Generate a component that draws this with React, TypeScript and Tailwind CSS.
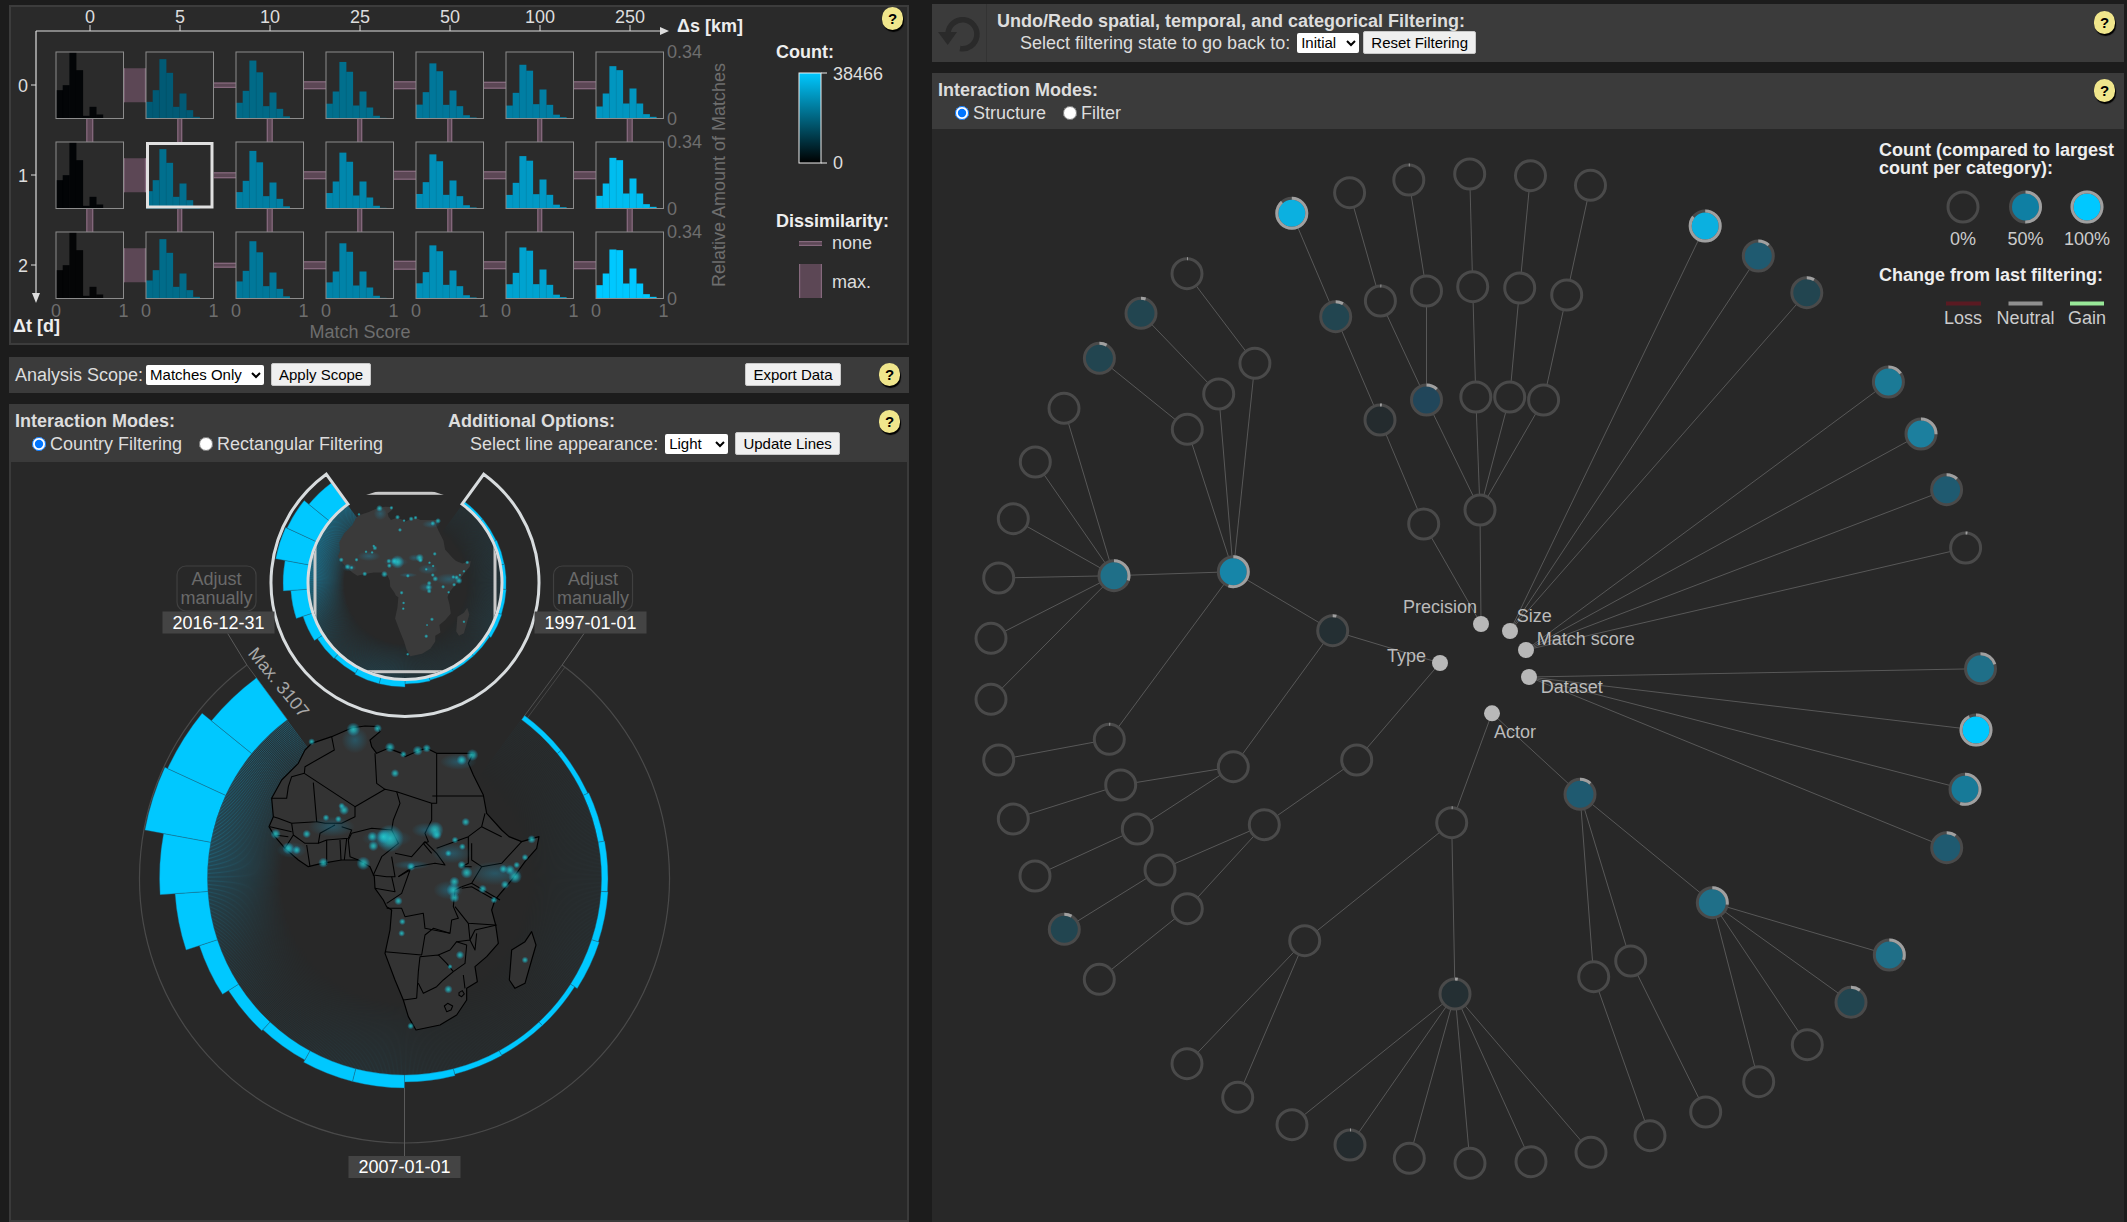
const CYAN = "#00c8ff";

// ---- small pieces ----

const HelpDot = () => (
  <span className="flex h-[23px] w-[21px] shrink-0 items-center justify-center rounded-full bg-[#f0e68c] text-[15px] font-bold text-black shadow-[1px_2px_1px_#000]">
    ?
  </span>
);

const Btn = ({ label, className = "" }: { label: string; className?: string }) => (
  <button
    type="button"
    className={`h-[23px] rounded-[2px] border border-[#c8c8c8] bg-[#efefef] text-[15px] leading-none text-black ${className}`}
  >
    {label}
  </button>
);

const Sel = ({ label, className = "" }: { label: string; className?: string }) => (
  <select className={`h-[20px] rounded-[2px] bg-white text-[15px] leading-none text-black ${className}`} defaultValue={label}>
    <option>{label}</option>
  </select>
);

const Radio = ({ label, name, checked, className = "" }: { label: string; name: string; checked?: boolean; className?: string }) => (
  <label className={`flex items-center ${className}`}>
    <input
      type="radio"
      name={name}
      defaultChecked={checked}
      className="mr-[4px] h-[14px] w-[14px] accent-[#0075ff]"
    />
    {label}
  </label>
);

const UndoIcon = () => (
  <svg width={55} height={58} viewBox="0 0 55 58">
    <path d="M16 29A14.5 14.5 0 1 1 28 44.5" fill="none" stroke="#2a2a2a" strokeWidth={5.5} />
    <polygon points="6,28 25,28 15.7,41" fill="#2a2a2a" />
  </svg>
);

// ---- matrix of histograms ----

const COL_X = [56, 146, 236, 326, 416, 506, 596];
const ROW_Y = [52, 142, 232];
const CELL_W = 67.5;
const CELL_H = 66.5;
const KM = ["0", "5", "10", "25", "50", "100", "250"];

const BAR_COLORS = [
  ["#030507", "#015a75", "#016a87", "#016f8d", "#01779a", "#017ea3", "#0196c0"],
  ["#020406", "#016f8e", "#017fa3", "#0187ad", "#018fb8", "#0199c5", "#00bdf0"],
  ["#040506", "#016c8a", "#01789a", "#0183a8", "#0190b8", "#00a3d0", "#00c8ff"],
];

const HIST_A = [50, 85, 178, 137, 35, 75, 25, 5, 0, 0];
const HIST_B = [36, 75, 157, 145, 45, 90, 45, 13, 5, 0];
const HIST_0 = [85, 100, 198, 145, 8, 35, 12, 0, 0, 0];

const histFor = (row: number, col: number) => {
  if (col === 0) return HIST_0;
  const t = (col - 1) / 5;
  return HIST_A.map((a, i) => {
    const v = a + (HIST_B[i] - a) * t;
    return i === 2 ? v - row * 2.5 * t * 2 : i === 0 ? v + row * 2 : v;
  });
};

const H_LINK = [
  [34, 5.5, 8, 8, 7, 8],
  [34, 6, 8, 9, 8, 8],
  [34, 5, 8, 9, 8, 8],
];
const V_LINK = [7, 5, 6, 5, 5, 5, 6];

const Link = ({ x, y, w, h }: { x: number; y: number; w: number; h: number }) => (
  <g>
    <rect x={x} y={y} width={w} height={h} fill="#5c4755" />
    {w > h ? (
      <>
        <rect x={x} y={y} width={w} height={1.2} fill="#86697d" />
        <rect x={x} y={y + h - 1.2} width={w} height={1.2} fill="#86697d" />
      </>
    ) : (
      <>
        <rect x={x} y={y} width={1.2} height={h} fill="#86697d" />
        <rect x={x + w - 1.2} y={y} width={1.2} height={h} fill="#86697d" />
      </>
    )}
  </g>
);

const MatrixChart = () => (
  <svg viewBox="9 5 900 340" className="absolute inset-0 h-full w-full" fontSize={18}>
    <defs>
      <linearGradient id="countScale" x1="0" y1="0" x2="0" y2="1">
        <stop offset="0" stopColor={CYAN} />
        <stop offset="1" stopColor="#000" />
      </linearGradient>
    </defs>

    {/* axes */}
    <line x1={36} y1={31} x2={664} y2={31} stroke="#ddd" strokeWidth={1.2} />
    <polygon points="660,27 669,31 660,35" fill="#ddd" />
    <line x1={36} y1={31} x2={36} y2={296} stroke="#ddd" strokeWidth={1.2} />
    <polygon points="32,293 40,293 36,303" fill="#ddd" />
    {KM.map((k, i) => (
      <g key={k}>
        <line x1={90 + i * 90} y1={31} x2={90 + i * 90} y2={25} stroke="#ddd" />
        <text x={90 + i * 90} y={17} fill="#ddd" textAnchor="middle" dominantBaseline="central">
          {k}
        </text>
      </g>
    ))}
    {[0, 1, 2].map((r) => (
      <g key={r}>
        <line x1={36} y1={85 + r * 90} x2={31} y2={85 + r * 90} stroke="#ddd" />
        <text x={23} y={86 + r * 90} fill="#ddd" textAnchor="middle" dominantBaseline="central">
          {r}
        </text>
      </g>
    ))}
    <text x={677} y={26} fill="#eee" fontWeight="bold" dominantBaseline="central">
      Δs [km]
    </text>
    <text x={13} y={326} fill="#eee" fontWeight="bold" dominantBaseline="central">
      Δt [d]
    </text>

    {/* links between the cells */}
    {ROW_Y.map((y, r) =>
      H_LINK[r].map((h, c) => (
        <Link key={`h${r}${c}`} x={COL_X[c] + CELL_W} y={y + CELL_H / 2 - h / 2} w={22.5} h={h} />
      ))
    )}
    {[0, 1].map((r) =>
      COL_X.map((x, c) => (
        <Link key={`v${r}${c}`} x={x + CELL_W / 2 - V_LINK[c] / 2} y={ROW_Y[r] + CELL_H} w={V_LINK[c]} h={23.5} />
      ))
    )}

    {/* cells */}
    {ROW_Y.map((y, r) =>
      COL_X.map((x, c) => {
        const selected = r === 1 && c === 1;
        const hist = histFor(r, c);
        return (
          <g key={`${r}-${c}`}>
            <rect x={x} y={y} width={CELL_W} height={CELL_H} fill="#2b2b2b" />
            {hist.map((h, i) =>
              h > 0 ? (
                <rect key={i} x={x + i * 6.7} y={y + CELL_H - h / 3} width={7} height={h / 3} fill={BAR_COLORS[r][c]} />
              ) : null
            )}
            {hist.map((h, i) =>
              i > 0 && h > 0 ? (
                <line
                  key={i}
                  x1={x + i * 6.7}
                  y1={y + CELL_H}
                  x2={x + i * 6.7}
                  y2={y + CELL_H - Math.min(h, hist[i - 1]) / 3}
                  stroke="#00000018"
                  strokeWidth={0.6}
                />
              ) : null
            )}
            <rect
              x={selected ? x + 1.5 : x}
              y={selected ? y + 1.5 : y}
              width={selected ? CELL_W - 3 : CELL_W}
              height={selected ? CELL_H - 3 : CELL_H}
              fill="none"
              stroke={selected ? "#e0e0e0" : "#8c8c8c"}
              strokeWidth={selected ? 3 : 1}
            />
            {r === 2 && (
              <g fill="#6e6e6e" textAnchor="middle" dominantBaseline="central">
                <text x={x} y={311}>
                  0
                </text>
                <text x={x + CELL_W} y={311}>
                  1
                </text>
              </g>
            )}
          </g>
        );
      })
    )}
    {ROW_Y.map((y) => (
      <g key={y} fill="#6e6e6e" dominantBaseline="central">
        <text x={667} y={y}>
          0.34
        </text>
        <text x={667} y={y + CELL_H}>
          0
        </text>
      </g>
    ))}
    <text x={360} y={332} fill="#6e6e6e" textAnchor="middle" dominantBaseline="central">
      Match Score
    </text>
    <text x={0} y={0} fill="#6e6e6e" textAnchor="middle" dominantBaseline="central" transform="translate(719 175) rotate(-90)">
      Relative Amount of Matches
    </text>

    {/* legends */}
    <text x={776} y={52} fill="#eee" fontWeight="bold" dominantBaseline="central">
      Count:
    </text>
    <rect x={799} y={73} width={22} height={90} fill="url(#countScale)" stroke="#eee" strokeWidth={1} />
    <line x1={821} y1={73} x2={827} y2={73} stroke="#eee" />
    <line x1={821} y1={163} x2={827} y2={163} stroke="#eee" />
    <text x={833} y={74} fill="#ddd" dominantBaseline="central">
      38466
    </text>
    <text x={833} y={163} fill="#ddd" dominantBaseline="central">
      0
    </text>
    <text x={776} y={221} fill="#eee" fontWeight="bold" dominantBaseline="central">
      Dissimilarity:
    </text>
    <Link x={799} y={241} w={23} h={5} />
    <text x={832} y={243} fill="#ddd" dominantBaseline="central">
      none
    </text>
    <Link x={799} y={264} w={23} h={34} />
    <text x={832} y={282} fill="#ddd" dominantBaseline="central">
      max.
    </text>
  </svg>
);

// ---- radial map ----

const START = 36.5;
const STEP = 14.35;
const BIN_R = [202, 202, 203, 203.5, 204, 205, 202, 202, 202.5, 204, 210, 210, 207.5, 209, 216, 230, 245, 264, 261, 249];

const polar = (cx: number, cy: number, r: number, deg: number): [number, number] => {
  const a = (deg * Math.PI) / 180;
  return [cx + r * Math.sin(a), cy - r * Math.cos(a)];
};

const wedge = (cx: number, cy: number, r0: number, r1: number, a0: number, a1: number) => {
  const [x0, y0] = polar(cx, cy, r0, a0);
  const [x1, y1] = polar(cx, cy, r1, a0);
  const [x2, y2] = polar(cx, cy, r1, a1);
  const [x3, y3] = polar(cx, cy, r0, a1);
  return `M${x0} ${y0}L${x1} ${y1}A${r1} ${r1} 0 0 1 ${x2} ${y2}L${x3} ${y3}A${r0} ${r0} 0 0 0 ${x0} ${y0}Z`;
};

// everything of the continent is written in one local grid (3 units = 1 px)
const AFRICA =
  "M230 50L290 24L330 18L368 20L375 35L345 60L350 80L365 100L400 85L440 100L450 110L490 92L515 85L545 100L600 100L655 100L640 130L655 165L685 225L695 280L740 330L762 350L800 365L852 350L845 385L810 425L770 480L720 540L710 570L722 615L730 670L695 710L660 740L667 785L635 805L635 840L605 885L555 915L483 930L460 890L445 840L420 780L390 700L405 630L410 570L395 560L385 540L360 505L358 470L345 440L310 420L260 420L200 430L160 440L130 420L90 385L60 350L42 320L55 290L50 235L80 180L130 130L150 90L170 70Z";
const MADAGASCAR = "M830 635L843 675L830 720L810 790L780 805L763 780L770 690L810 665Z";
const BORDERS = [
  "M230 50L238 90L150 140L148 160L110 170L100 200L95 235L50 235",
  "M148 160L300 260L390 208L425 215L530 250L545 250L545 100",
  "M360 100L365 190L390 208",
  "M532 228L685 228",
  "M530 250L530 300L510 340L520 365L505 370L530 400",
  "M425 215L435 250L415 300L410 330L430 370L380 410L355 465L395 470L420 470L410 410",
  "M175 188L185 305L110 310L70 295L55 290",
  "M185 305L210 310L260 310L300 290L300 260",
  "M260 320L290 330L280 355L215 360L190 370L195 340L240 315",
  "M290 340L350 325L410 330",
  "M290 340L280 360L285 410L310 420",
  "M215 360L215 435M255 360L258 420M275 355L268 420",
  "M155 375L165 440M110 310L115 345L150 370L190 370M90 385L115 345",
  "M45 320L110 335M60 345L100 350",
  "M420 400L470 410L510 365L545 400L570 435L540 430L480 440L460 450L430 470",
  "M360 505L420 515L410 470M430 470L465 450L440 520L395 550",
  "M395 565L440 565L450 590L505 580L510 625L585 640L590 600L610 595L595 560L600 510L620 500",
  "M545 385L640 350L640 430L620 440M640 350L680 320L690 280M680 320L740 350",
  "M650 370L650 420L680 440L740 430L800 365M650 490L735 540M680 440L650 490L620 500M620 440L650 440",
  "M620 505L650 500L720 540M600 560L640 610L720 615",
  "M390 695L500 705L510 645L535 625L585 640",
  "M495 710L490 755L485 835M495 710L550 705L575 730L595 755L565 780L545 800L505 820L490 790",
  "M550 705L585 690L605 665L635 675L630 730L595 755",
  "M605 665L645 660L640 610M660 630L645 660L660 690L665 640M660 630L725 615",
  "M625 765L630 805M445 840L485 835",
];
const LESOTHO = "M568 858L578 850L593 858L588 870L575 875Z";
const SWAZI = "M612 818L622 812L628 822L620 830L612 826Z";

const SPOTS: [number, number, number][] = [
  [295, 28, 8], [368, 25, 5], [405, 82, 6], [445, 103, 4], [488, 92, 6], [515, 85, 5], [620, 120, 6], [652, 105, 7],
  [420, 160, 5], [170, 65, 4], [260, 258, 4], [267, 270, 6], [250, 297, 4], [213, 293, 4], [155, 342, 5], [62, 342, 6],
  [100, 385, 7], [125, 390, 5], [205, 428, 6], [352, 350, 6], [355, 378, 6], [405, 355, 16], [385, 350, 8], [325, 430, 8],
  [468, 440, 5], [540, 330, 10], [545, 345, 6], [632, 306, 5], [600, 360, 4], [622, 380, 4], [580, 400, 4], [620, 435, 5],
  [635, 458, 7], [598, 485, 6], [595, 510, 8], [598, 533, 6], [780, 470, 8], [765, 450, 6], [745, 447, 5], [785, 435, 4],
  [810, 412, 4], [830, 358, 5], [750, 494, 5], [683, 507, 5], [717, 540, 4], [430, 543, 5], [442, 605, 4], [440, 640, 4],
  [615, 705, 5], [585, 740, 3], [580, 808, 5], [810, 720, 4], [467, 918, 4],
];
const GLOWS: [number, number, number, number][] = [
  [610, 125, 55, 24], [395, 355, 75, 28], [720, 460, 85, 36], [580, 510, 45, 28], [510, 330, 40, 22], [300, 60, 40, 40], [110, 390, 45, 24], [470, 435, 55, 14], [230, 320, 70, 30], [590, 400, 60, 30],
];

const Land = ({ borders, fill }: { borders: boolean; fill: string }) => (
  <g>
    <path d={AFRICA} fill={fill} stroke={borders ? "#000" : "none"} strokeWidth={3.5} strokeLinejoin="round" />
    <path d={MADAGASCAR} fill={fill} stroke={borders ? "#000" : "none"} strokeWidth={3.5} strokeLinejoin="round" />
    {borders && (
      <g fill="none" stroke="#000" strokeWidth={3.2} strokeLinejoin="round">
        {BORDERS.map((d) => (
          <path key={d} d={d} />
        ))}
        <path d={LESOTHO} />
        <path d={SWAZI} />
      </g>
    )}
    {GLOWS.map(([x, y, rx, ry]) => (
      <ellipse key={`${x}${y}`} cx={x} cy={y} rx={rx} ry={ry} fill="url(#glow)" />
    ))}
    {SPOTS.map(([x, y, r]) => (
      <circle key={`${x}-${y}`} cx={x} cy={y} r={r * 2.6} fill="url(#spot)" />
    ))}
  </g>
);

const Halo = ({ cx, cy, r, id, radii, scale }: { cx: number; cy: number; r: number; id: string; radii: number[]; scale: number }) => {
  const lines = [];
  for (let d = START; d < 323.5; d += 0.4) {
    const pos = Math.min(18.99, Math.max(0, (d - START) / STEP - 0.5));
    const bin = Math.floor(pos);
    const f = pos - bin;
    const value = radii[bin] * (1 - f) + radii[bin + 1] * f;
    const power = Math.min(1, (value - r) / (scale * 50));
    const [x0, y0] = polar(cx, cy, r, d);
    const [x1, y1] = polar(cx, cy, r * 0.6, d);
    lines.push(
      <line key={d} x1={x0} y1={y0} x2={x1} y2={y1} stroke={`url(#${id})`} strokeWidth={0.7} opacity={0.03 + 0.6 * Math.pow(power, 1.2)} />
    );
  }
  return <g>{lines}</g>;
};

const Bars = ({ cx, cy, r, radii }: { cx: number; cy: number; r: number; radii: number[] }) => (
  <g>
    {radii.map((rr, i) => (
      <path
        key={i}
        d={wedge(cx, cy, r, rr, START + i * STEP, START + (i + 1) * STEP)}
        fill={CYAN}
        stroke="#1c5f7c"
        strokeWidth={0.4}
      />
    ))}
  </g>
);

const Tag = ({ x, y, label }: { x: number; y: number; label: string }) => (
  <g>
    <rect x={x} y={y} width={112} height={22} fill="#444" />
    <text x={x + 56} y={y + 11} fill="#fff" textAnchor="middle" dominantBaseline="central">
      {label}
    </text>
  </g>
);

const Adjust = ({ x }: { x: number }) => (
  <g>
    <rect x={x} y={566} width={79} height={45} rx={9} fill="none" stroke="#404040" strokeWidth={1.2} />
    <text x={x + 39.5} y={579} fill="#6a6a6a" textAnchor="middle" dominantBaseline="central">
      Adjust
    </text>
    <text x={x + 39.5} y={598} fill="#6a6a6a" textAnchor="middle" dominantBaseline="central">
      manually
    </text>
  </g>
);

const CX = 404.5;
const CY = 878;
const SX = 405;
const SY = 582.6;
const SMALL_R = BIN_R.map((r) => 98 + (r - 197) * 0.5);

const ringPath = () => {
  const [ax, ay] = polar(SX, SY, 134, 36);
  const [bx, by] = polar(SX, SY, 134, 324);
  const [cx, cy] = polar(SX, SY, 97, 324);
  const [dx, dy] = polar(SX, SY, 97, 36);
  return `M${ax} ${ay}A134 134 0 1 1 ${bx} ${by}L${cx} ${cy}A97 97 0 1 0 ${dx} ${dy}Z`;
};

const [leftX, leftY] = polar(CX, CY, 265, 323.5);
const [rightX, rightY] = polar(CX, CY, 265, 36.5);
const [leftIX, leftIY] = polar(CX, CY, 197, 323.5);
const [rightIX, rightIY] = polar(CX, CY, 197, 36.5);

const MapChart = () => (
  <svg viewBox="9 460 900 762" className="absolute inset-0 h-full w-full" fontSize={18}>
    <defs>
      <radialGradient id="haloBig" gradientUnits="userSpaceOnUse" cx={CX} cy={CY} r={197}>
        <stop offset="0.62" stopColor="#16a4d4" stopOpacity={0} />
        <stop offset="1" stopColor="#16a4d4" stopOpacity={1} />
      </radialGradient>
      <radialGradient id="haloSmall" gradientUnits="userSpaceOnUse" cx={SX} cy={SY} r={97}>
        <stop offset="0.62" stopColor="#16a4d4" stopOpacity={0} />
        <stop offset="1" stopColor="#16a4d4" stopOpacity={1} />
      </radialGradient>
      <radialGradient id="spot">
        <stop offset="0" stopColor="#26d2d6" stopOpacity={0.8} />
        <stop offset="0.38" stopColor="#1fc4cc" stopOpacity={0.62} />
        <stop offset="1" stopColor="#16a4d4" stopOpacity={0} />
      </radialGradient>
      <radialGradient id="glow">
        <stop offset="0" stopColor="#12a8d8" stopOpacity={0.3} />
        <stop offset="1" stopColor="#12a8d8" stopOpacity={0} />
      </radialGradient>
      <clipPath id="brushClip">
        <circle cx={SX} cy={SY} r={95.5} />
      </clipPath>
    </defs>

    {/* big view */}
    <Halo cx={CX} cy={CY} r={197} id="haloBig" radii={BIN_R} scale={1} />
    <g transform="translate(255 720) scale(0.33333)">
      <Land borders fill="#333333" />
    </g>
    <path
      d={`M${polar(CX, CY, 265, 36.5).join(" ")}A265 265 0 1 1 ${polar(CX, CY, 265, 323.5).join(" ")}`}
      fill="none"
      stroke="#4a4a4a"
      strokeWidth={1.2}
    />
    <line x1={leftX} y1={leftY} x2={leftIX} y2={leftIY} stroke="#505050" />
    <line x1={rightX} y1={rightY} x2={rightIX} y2={rightIY} stroke="#505050" />
    <line x1={rightX + 3} y1={rightY + 2} x2={rightIX + 3} y2={rightIY + 2} stroke="#454545" />
    <Bars cx={CX} cy={CY} r={197} radii={BIN_R} />
    <line x1={CX} y1={1088} x2={CX} y2={1156} stroke="#5a5a5a" />
    <line x1={227.7} y1={633.5} x2={leftX} y2={leftY} stroke="#5a5a5a" />
    <line x1={584} y1={633.5} x2={rightX} y2={rightY} stroke="#5a5a5a" />
    <text x={0} y={0} fill="#a8a8a8" dominantBaseline="central" transform={`translate(252 650) rotate(50.5)`}>
      Max. 3107
    </text>

    {/* small context view */}
    <Halo cx={SX} cy={SY} r={97} id="haloSmall" radii={SMALL_R} scale={0.5} />
    <g transform="translate(331.1 503.7) scale(0.164)">
      <Land borders={false} fill="#3a3a3a" />
    </g>
    <Bars cx={SX} cy={SY} r={97} radii={SMALL_R} />
    <path d={ringPath()} fill="none" stroke="#d8dcde" strokeWidth={3} />
    <g clipPath="url(#brushClip)">
      <rect x={315} y={493.3} width={180} height={178.4} fill="none" stroke="#c8c8c8" strokeWidth={3} />
    </g>

    <Adjust x={177} />
    <Adjust x={553.5} />
    <Tag x={162.5} y={611.5} label="2016-12-31" />
    <Tag x={534.5} y={611.5} label="1997-01-01" />
    <Tag x={348.5} y={1156} label="2007-01-01" />
  </svg>
);

// ---- tree of categories ----

type NodeDef = { x: number; y: number; fill?: string; arc?: number };

const N: Record<string, NodeDef> = {
  // actor
  a1: { x: 1451.7, y: 822.7, arc: 0.01 },
  a2: { x: 1304.7, y: 940.7 },
  a3: { x: 1455, y: 994, fill: "#242f33", arc: 0.03 },
  a4: { x: 1187, y: 1063.7 },
  a5: { x: 1237.7, y: 1097.3 },
  a6: { x: 1292, y: 1124.7 },
  a7: { x: 1350, y: 1145, fill: "#242b2e", arc: 0.01 },
  a8: { x: 1409.3, y: 1158.3 },
  a9: { x: 1470, y: 1163.3 },
  a10: { x: 1531, y: 1161.7 },
  a11: { x: 1591, y: 1152.3 },
  b1: { x: 1580, y: 794.3, fill: "#1f5a70", arc: 0.12 },
  b2: { x: 1712.3, y: 902.7, fill: "#1f6f88", arc: 0.27 },
  b3: { x: 1889.3, y: 955, fill: "#1f6f88", arc: 0.3 },
  b4: { x: 1851, y: 1002.3, fill: "#224550", arc: 0.1 },
  b5: { x: 1807.3, y: 1044.7 },
  b6: { x: 1758.7, y: 1081.7 },
  b7: { x: 1705.7, y: 1112 },
  b8: { x: 1650, y: 1135.7 },
  b9: { x: 1630.7, y: 961 },
  b10: { x: 1593.7, y: 976.7 },
  // type
  t1: { x: 1332.7, y: 630.7, fill: "#242f33", arc: 0.04 },
  t2: { x: 1356.7, y: 760 },
  t3: { x: 1233.3, y: 571.7, fill: "#1685a8", arc: 0.55 },
  t4: { x: 1233.3, y: 766.7 },
  t5: { x: 1264.3, y: 824.7 },
  t6: { x: 1160, y: 870 },
  t7: { x: 1187.3, y: 908.7 },
  t8: { x: 1064.3, y: 929.3, fill: "#224550", arc: 0.08 },
  t9: { x: 1099.3, y: 979.3 },
  t10: { x: 1120.7, y: 785 },
  t11: { x: 1137.3, y: 829 },
  t12: { x: 1013.3, y: 819 },
  t13: { x: 1035, y: 876 },
  t14: { x: 1114, y: 575.7, fill: "#1f6f88", arc: 0.3 },
  t15: { x: 1109.3, y: 739.3, arc: 0.01 },
  t16: { x: 1187.3, y: 429.3 },
  t17: { x: 1218.7, y: 394 },
  t18: { x: 1254.9, y: 363.3 },
  t19: { x: 998.7, y: 760 },
  t20: { x: 1064, y: 408.3 },
  t21: { x: 1035.3, y: 462 },
  t22: { x: 1013.3, y: 518.7 },
  t23: { x: 998.7, y: 578 },
  t24: { x: 991, y: 638.3 },
  t25: { x: 991, y: 699.3 },
  t26: { x: 1099.4, y: 358.3, fill: "#224550", arc: 0.08 },
  t27: { x: 1141, y: 313.3, fill: "#224550", arc: 0.05 },
  t28: { x: 1187, y: 273.7, arc: 0.01 },
  // precision
  p1: { x: 1480, y: 510 },
  p2: { x: 1423.7, y: 524 },
  p3: { x: 1380, y: 420, fill: "#242b2e", arc: 0.02 },
  p4: { x: 1335.7, y: 316.7, fill: "#224550", arc: 0.08 },
  p5: { x: 1291.8, y: 213.3, fill: "#0bb0e0", arc: 0.88 },
  p6: { x: 1426.5, y: 400, fill: "#21465a", arc: 0.12 },
  p7: { x: 1475.8, y: 397 },
  p8: { x: 1509.7, y: 397 },
  p9: { x: 1543.6, y: 400 },
  p10: { x: 1380.4, y: 301, arc: 0.01 },
  p11: { x: 1426.5, y: 291 },
  p12: { x: 1472.7, y: 286.7 },
  p13: { x: 1519.7, y: 288 },
  p14: { x: 1566.7, y: 295 },
  p15: { x: 1349.6, y: 192.7 },
  p16: { x: 1408.8, y: 180, arc: 0.01 },
  p17: { x: 1469.7, y: 174 },
  p18: { x: 1530.5, y: 175.7 },
  p19: { x: 1590.5, y: 185.3 },
  // size
  s1: { x: 1705.2, y: 226, fill: "#0bb0e0", arc: 0.85 },
  s2: { x: 1758.3, y: 256, fill: "#1f5a70", arc: 0.12 },
  s3: { x: 1806.8, y: 292.7, fill: "#224550", arc: 0.08 },
  // match score
  m1: { x: 1888.4, y: 382, fill: "#1b7a96", arc: 0.15 },
  m2: { x: 1921, y: 434, fill: "#1c7f9e", arc: 0.25 },
  m3: { x: 1946.6, y: 489.7, fill: "#1f5a70", arc: 0.12 },
  m4: { x: 1965.6, y: 548, arc: 0.02 },
  // dataset
  d1: { x: 1980.5, y: 668.7, fill: "#1f6f88", arc: 0.2 },
  d2: { x: 1976, y: 730, fill: CYAN, arc: 0.92 },
  d3: { x: 1965, y: 789.3, fill: "#177a98", arc: 0.55 },
  d4: { x: 1946.7, y: 847.7, fill: "#1f5a70", arc: 0.1 },
};

const ROOTS: Record<string, { x: number; y: number; label: string; lx: number; ly: number }> = {
  precision: { x: 1481, y: 624, label: "Precision", lx: 1403, ly: 607 },
  size: { x: 1510, y: 631, label: "Size", lx: 1516.7, ly: 616 },
  match: { x: 1526, y: 650, label: "Match score", lx: 1536.7, ly: 639 },
  dataset: { x: 1529, y: 677, label: "Dataset", lx: 1540.7, ly: 687 },
  actor: { x: 1492, y: 713.3, label: "Actor", lx: 1494, ly: 732 },
  type: { x: 1440, y: 663, label: "Type", lx: 1387, ly: 656 },
};

const EDGES: [string, string][] = [
  ["actor", "b1"], ["actor", "a1"], ["a1", "a2"], ["a1", "a3"], ["a2", "a4"], ["a2", "a5"],
  ["a3", "a6"], ["a3", "a7"], ["a3", "a8"], ["a3", "a9"], ["a3", "a10"], ["a3", "a11"],
  ["b1", "b2"], ["b1", "b9"], ["b1", "b10"], ["b10", "b8"], ["b9", "b7"],
  ["b2", "b3"], ["b2", "b4"], ["b2", "b5"], ["b2", "b6"],
  ["type", "t1"], ["type", "t2"], ["t1", "t3"], ["t1", "t4"], ["t2", "t5"], ["t5", "t6"], ["t5", "t7"],
  ["t6", "t8"], ["t7", "t9"], ["t4", "t10"], ["t4", "t11"], ["t10", "t12"], ["t11", "t13"],
  ["t3", "t14"], ["t3", "t15"], ["t3", "t16"], ["t3", "t17"], ["t3", "t18"], ["t15", "t19"],
  ["t14", "t20"], ["t14", "t21"], ["t14", "t22"], ["t14", "t23"], ["t14", "t24"], ["t14", "t25"],
  ["t16", "t26"], ["t17", "t27"], ["t18", "t28"],
  ["precision", "p1"], ["precision", "p2"], ["p2", "p3"], ["p3", "p4"], ["p4", "p5"],
  ["p1", "p6"], ["p1", "p7"], ["p1", "p8"], ["p1", "p9"],
  ["p6", "p10"], ["p6", "p11"], ["p7", "p12"], ["p8", "p13"], ["p9", "p14"],
  ["p10", "p15"], ["p11", "p16"], ["p12", "p17"], ["p13", "p18"], ["p14", "p19"],
  ["size", "s1"], ["size", "s2"], ["size", "s3"],
  ["match", "m1"], ["match", "m2"], ["match", "m3"], ["match", "m4"],
  ["dataset", "d1"], ["dataset", "d2"], ["dataset", "d3"], ["dataset", "d4"],
];

const at = (id: string) => N[id] ?? ROOTS[id];

const TreeNode = ({ x, y, fill, arc = 0 }: NodeDef) => {
  const c = 2 * Math.PI * 15;
  return (
    <g>
      <circle cx={x} cy={y} r={15} fill={fill ?? "#282828"} stroke="#4a4a4a" strokeWidth={3} />
      {arc > 0 && (
        <circle
          cx={x}
          cy={y}
          r={15}
          fill="none"
          stroke="#a0a0a0"
          strokeWidth={3}
          strokeDasharray={`${arc * c} ${c}`}
          transform={`rotate(-90 ${x} ${y})`}
        />
      )}
    </g>
  );
};

const TreeChart = () => (
  <svg viewBox="932 129 1192 1093" className="absolute inset-0 h-full w-full" fontSize={18}>
    {EDGES.map(([a, b]) => (
      <line key={a + b} x1={at(a).x} y1={at(a).y} x2={at(b).x} y2={at(b).y} stroke="#585858" strokeWidth={1} />
    ))}
    {Object.entries(N).map(([id, n]) => (
      <TreeNode key={id} {...n} />
    ))}
    {Object.entries(ROOTS).map(([id, r]) => (
      <g key={id}>
        <circle cx={r.x} cy={r.y} r={8} fill="#b8b8b8" />
        <text x={r.lx} y={r.ly} fill="#bbb" dominantBaseline="central">
          {r.label}
        </text>
      </g>
    ))}

    {/* legend */}
    <text x={1879} y={150} fill="#eee" fontWeight="bold" dominantBaseline="central">
      Count (compared to largest
    </text>
    <text x={1879} y={168} fill="#eee" fontWeight="bold" dominantBaseline="central">
      count per category):
    </text>
    <TreeNode x={1963} y={207} />
    <TreeNode x={2025.5} y={207} fill="#0f7fa3" arc={0.5} />
    <TreeNode x={2087} y={207} fill={CYAN} arc={1} />
    {[
      ["0%", 1963],
      ["50%", 2025.5],
      ["100%", 2087],
    ].map(([t, x]) => (
      <text key={t} x={x} y={239} fill="#ccc" textAnchor="middle" dominantBaseline="central">
        {t}
      </text>
    ))}
    <text x={1879} y={275} fill="#eee" fontWeight="bold" dominantBaseline="central">
      Change from last filtering:
    </text>
    <rect x={1946} y={301.5} width={35} height={4} fill="#5a1a22" />
    <rect x={2008.5} y={301.5} width={34} height={4} fill="#8f8f8f" />
    <rect x={2070} y={301.5} width={34} height={4} fill="#98e898" />
    {[
      ["Loss", 1963],
      ["Neutral", 2025.5],
      ["Gain", 2087],
    ].map(([t, x]) => (
      <text key={t} x={x} y={318} fill="#ccc" textAnchor="middle" dominantBaseline="central">
        {t}
      </text>
    ))}
  </svg>
);

// ---- page ----

export default function App() {
  return (
    <div className="flex h-[1222px] w-[2127px] overflow-hidden bg-[#1c1c1c] font-['Liberation_Sans',Arial,sans-serif] text-[18px] leading-none text-[#ddd]">
      <div className="ml-[9px] flex w-[900px] shrink-0 flex-col pt-[5px]">
        <div className="relative h-[340px] shrink-0 bg-[#2a2a2a] outline-2 -outline-offset-2 outline-[#3c3c3c]">
          <MatrixChart />
          <span className="absolute top-[2px] right-[6px]">
            <HelpDot />
          </span>
        </div>

        <div className="mt-[12px] flex h-[36px] shrink-0 items-center bg-[#3b3b3b] pb-[1px] pl-[6px]">
          <span>Analysis Scope:</span>
          <Sel label="Matches Only" className="ml-[3px] w-[118px]" />
          <Btn label="Apply Scope" className="ml-[7px] w-[100px]" />
          <Btn label="Export Data" className="ml-auto w-[96px]" />
          <span className="mr-[9px] ml-[38px]">
            <HelpDot />
          </span>
        </div>

        <div className="mt-[11px] flex h-[56px] shrink-0 bg-[#3b3b3b] pl-[6px]">
          <div className="flex w-[433px] flex-col pt-[8px]">
            <span className="font-bold">Interaction Modes:</span>
            <div className="mt-[5px] flex pl-[17px]">
              <Radio label="Country Filtering" name="geo" checked />
              <Radio label="Rectangular Filtering" name="geo" className="ml-[17px]" />
            </div>
          </div>
          <div className="flex flex-col pt-[8px]">
            <span className="font-bold">Additional Options:</span>
            <div className="mt-[2px] flex items-center pl-[22px]">
              <span>Select line appearance:</span>
              <Sel label="Light" className="ml-[7px] w-[63px]" />
              <Btn label="Update Lines" className="ml-[7px] w-[105px]" />
            </div>
          </div>
          <span className="mt-[6px] mr-[9px] ml-auto">
            <HelpDot />
          </span>
        </div>

        <div className="relative flex-1 bg-[#282828] outline-2 -outline-offset-2 outline-[#3a3a3a]">
          <MapChart />
        </div>
      </div>

      <div className="ml-[23px] flex w-[1192px] shrink-0 flex-col pt-[4px]">
        <div className="flex h-[58px] shrink-0 bg-[#3b3b3b]">
          <div className="w-[55px] border-r border-[#333]">
            <UndoIcon />
          </div>
          <div className="flex flex-col pt-[8px] pl-[10px]">
            <span className="font-bold">Undo/Redo spatial, temporal, and categorical Filtering:</span>
            <div className="mt-[1px] flex items-center pl-[23px]">
              <span>Select filtering state to go back to:</span>
              <Sel label="Initial" className="ml-[7px] w-[62px]" />
              <Btn label="Reset Filtering" className="ml-[4px] w-[113px]" />
            </div>
          </div>
          <span className="mt-[7px] mr-[9px] ml-auto">
            <HelpDot />
          </span>
        </div>

        <div className="mt-[11px] flex h-[56px] shrink-0 bg-[#3b3b3b] pl-[6px]">
          <div className="flex flex-col pt-[8px]">
            <span className="font-bold">Interaction Modes:</span>
            <div className="mt-[5px] flex pl-[17px]">
              <Radio label="Structure" name="tree" checked />
              <Radio label="Filter" name="tree" className="ml-[17px]" />
            </div>
          </div>
          <span className="mt-[6px] mr-[9px] ml-auto">
            <HelpDot />
          </span>
        </div>

        <div className="relative flex-1 bg-[#282828]">
          <TreeChart />
        </div>
      </div>
    </div>
  );
}
